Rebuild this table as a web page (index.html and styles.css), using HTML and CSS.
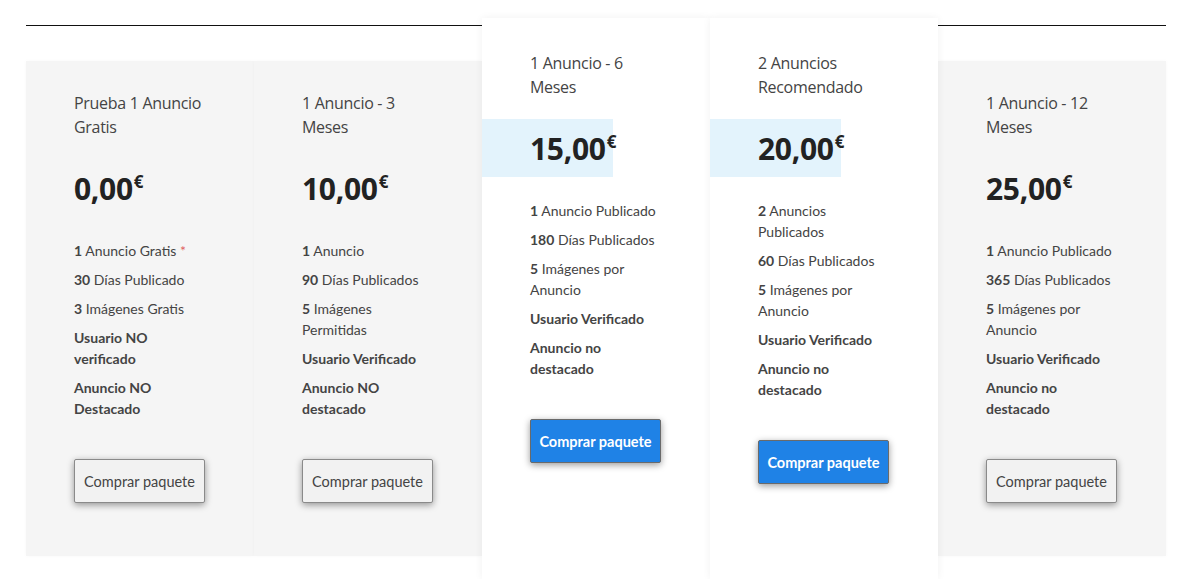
FILE: index.html
```html
<!DOCTYPE html>
<html lang="es">
<head>
<meta charset="utf-8">
<title>Paquetes</title>
<link rel="stylesheet" href="styles.css">
</head>
<body>
<div class="page">
  <hr class="rule">
  <div class="plans">
    <div class="plan">
      <h3 class="plan-title">Prueba 1 Anuncio Gratis</h3>
      <div class="price"><span class="amount">0,00</span><span class="cur">€</span></div>
      <ul class="features">
        <li><b>1</b> Anuncio Gratis <span class="star">*</span></li>
        <li><b>30</b> Días Publicado</li>
        <li><b>3</b> Imágenes Gratis</li>
        <li><b>Usuario NO verificado</b></li>
        <li><b>Anuncio NO Destacado</b></li>
      </ul>
      <button class="buy">Comprar paquete</button>
    </div>
    <div class="plan">
      <h3 class="plan-title">1 Anuncio - 3 Meses</h3>
      <div class="price"><span class="amount">10,00</span><span class="cur">€</span></div>
      <ul class="features">
        <li><b>1</b> Anuncio</li>
        <li><b>90</b> Días Publicados</li>
        <li><b>5</b> Imágenes Permitidas</li>
        <li><b>Usuario Verificado</b></li>
        <li><b>Anuncio NO destacado</b></li>
      </ul>
      <button class="buy">Comprar paquete</button>
    </div>
    <div class="plan featured">
      <h3 class="plan-title">1 Anuncio - 6 Meses</h3>
      <div class="price"><span class="amount">15,00</span><span class="cur">€</span></div>
      <ul class="features">
        <li><b>1</b> Anuncio Publicado</li>
        <li><b>180</b> Días Publicados</li>
        <li><b>5</b> Imágenes por Anuncio</li>
        <li><b>Usuario Verificado</b></li>
        <li><b>Anuncio no destacado</b></li>
      </ul>
      <button class="buy primary">Comprar paquete</button>
    </div>
    <div class="plan featured">
      <h3 class="plan-title">2 Anuncios Recomendado</h3>
      <div class="price"><span class="amount">20,00</span><span class="cur">€</span></div>
      <ul class="features">
        <li><b>2</b> Anuncios Publicados</li>
        <li><b>60</b> Días Publicados</li>
        <li><b>5</b> Imágenes por Anuncio</li>
        <li><b>Usuario Verificado</b></li>
        <li><b>Anuncio no destacado</b></li>
      </ul>
      <button class="buy primary">Comprar paquete</button>
    </div>
    <div class="plan">
      <h3 class="plan-title">1 Anuncio - 12 Meses</h3>
      <div class="price"><span class="amount">25,00</span><span class="cur">€</span></div>
      <ul class="features">
        <li><b>1</b> Anuncio Publicado</li>
        <li><b>365</b> Días Publicados</li>
        <li><b>5</b> Imágenes por Anuncio</li>
        <li><b>Usuario Verificado</b></li>
        <li><b>Anuncio no destacado</b></li>
      </ul>
      <button class="buy">Comprar paquete</button>
    </div>
  </div>
</div>
</body>
</html>
```

FILE: styles.css
```css
* { box-sizing: border-box; }

html, body {
  margin: 0;
  padding: 0;
  background: #ffffff;
  overflow: hidden;
}

body {
  font-family: "Lato", "Noto Sans", sans-serif;
  color: #444;
}

.page {
  padding: 25px 20px 0 26px;
  height: 579px;
  overflow: hidden;
}

.rule {
  margin: 0;
  width: 1140px;
  height: 1px;
  border: 0;
  background: #111;
}

.plans {
  display: flex;
  align-items: flex-start;
  width: 1140px;
}

.plan {
  width: 228px;
  flex: 0 0 228px;
  background: #f5f5f5;
  margin-top: 35px;
  padding: 30px 49px 53px 48px;
  box-shadow: 0 0 4px rgba(0, 0, 0, 0.03);
}

.plan.featured {
  position: relative;
  z-index: 1;
  background: #fff;
  margin-top: -8px;
  padding-top: 33px;
  height: 561px;
  box-shadow: 0 0 8px rgba(0, 0, 0, 0.06);
}

.plan-title {
  margin: 0;
  font-family: "Open Sans", "Lato", sans-serif;
  font-weight: 400;
  font-size: 16px;
  line-height: 24px;
  color: #444;
  letter-spacing: -0.3px;
}

.price {
  margin: 20px 0 0 -48px;
  width: 131px;
  height: 58px;
  padding-left: 48px;
  display: flex;
  align-items: center;
  font-family: "Open Sans", sans-serif;
  font-weight: 700;
  color: #222;
}

.featured .price {
  background: #e3f3fc;
}

.amount {
  font-size: 30px;
  line-height: 1;
  letter-spacing: -0.3px;
  margin-top: 2px;
}

.cur {
  font-size: 17px;
  line-height: 1;
  align-self: flex-start;
  margin-top: 14px;
  margin-left: 1px;
}

.features {
  list-style: none;
  margin: 23px 0 0;
  padding: 0;
}

.features li {
  font-size: 14px;
  line-height: 21px;
  margin-bottom: 8px;
  color: #444;
}

.features li:last-child {
  margin-bottom: 0;
}

.features b {
  font-weight: 700;
}

.star {
  color: #e06262;
}

.buy {
  display: block;
  margin-top: 40px;
  width: 131px;
  height: 44px;
  padding: 0;
  font-family: "Lato", sans-serif;
  font-size: 14.5px;
  color: #444;
  background: #f2f2f2;
  border: 1px solid #8a8a8a;
  border-radius: 2px;
  box-shadow: 0 2px 7px rgba(0, 0, 0, 0.4);
  cursor: pointer;
}

.buy.primary {
  background: #1f82e6;
  color: #fff;
  font-weight: 700;
  border-color: #6a6a6a;
}
```
